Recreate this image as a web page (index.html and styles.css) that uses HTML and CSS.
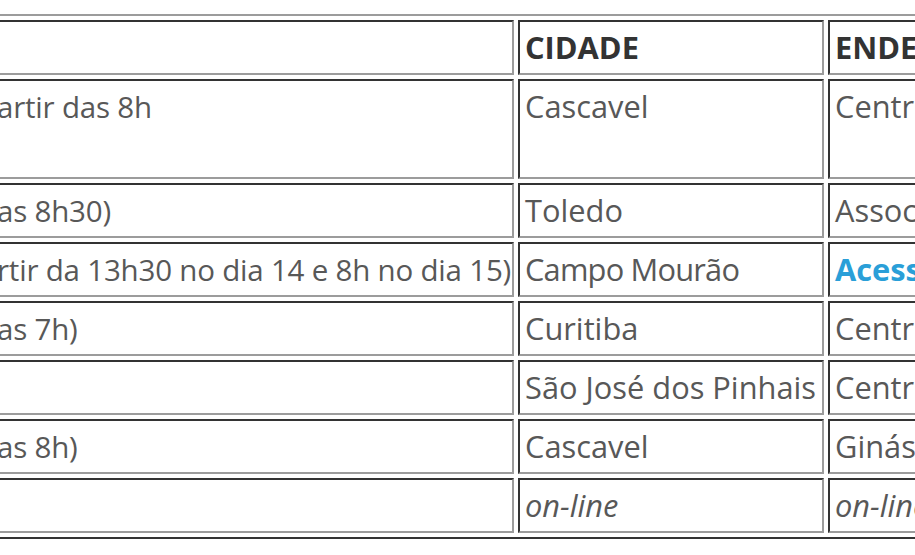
FILE: index.html
```html
<!DOCTYPE html>
<html lang="pt-BR">
<head>
<meta charset="utf-8">
<title>Agenda</title>
<link rel="stylesheet" href="styles.css">
</head>
<body>
<div class="viewport">
  <table class="schedule">
    <thead>
      <tr>
        <th class="c-date"></th>
        <th class="c-city">CIDADE</th>
        <th class="c-addr">ENDEREÇO</th>
        <th class="c-extra">INFORMAÇÕES</th>
      </tr>
    </thead>
    <tbody>
      <tr>
        <td class="when">artir das 8h</td>
        <td>Cascavel</td>
        <td>Centro de Convenções</td>
        <td>Vagas limitadas<br>inscrição prévia</td>
      </tr>
      <tr>
        <td class="when">as 8h30)</td>
        <td>Toledo</td>
        <td>Associação Comercial</td>
        <td>Gratuito</td>
      </tr>
      <tr>
        <td class="when">rtir da 13h30 no dia 14 e 8h no dia 15)</td>
        <td class="narrow">Campo Mourão</td>
        <td><a class="link" href="#">Acesse aqui</a></td>
        <td>Gratuito</td>
      </tr>
      <tr>
        <td class="when">as 7h)</td>
        <td>Curitiba</td>
        <td>Centro de Eventos</td>
        <td>Gratuito</td>
      </tr>
      <tr>
        <td class="when"></td>
        <td>São José dos Pinhais</td>
        <td>Centro Cultural</td>
        <td>Gratuito</td>
      </tr>
      <tr>
        <td class="when">as 8h)</td>
        <td>Cascavel</td>
        <td>Ginásio de Esportes</td>
        <td>Gratuito</td>
      </tr>
      <tr>
        <td class="when"></td>
        <td><em>on-line</em></td>
        <td><em>on-line</em></td>
        <td>Gratuito</td>
      </tr>
    </tbody>
  </table>
</div>
</body>
</html>
```

FILE: styles.css
```css
html, body {
  margin: 0;
  padding: 0;
  background: #ffffff;
}

.viewport {
  width: 915px;
  height: 555px;
  overflow: hidden;
  padding-top: 14px;
  box-sizing: border-box;
}

.schedule {
  table-layout: fixed;
  width: 1582px;
  margin-left: -16px;
  border-collapse: separate;
  border-spacing: 4px;
  border-style: solid;
  border-width: 2px;
  border-top-color: #9c9c9c;
  border-left-color: #9c9c9c;
  border-right-color: #333333;
  border-bottom-color: #333333;
  font-family: "Open Sans", "Liberation Sans", sans-serif;
  font-size: 30.8px;
  line-height: 45px;
  color: #585858;
}

.schedule th,
.schedule td {
  box-sizing: border-box;
  padding: 3px 5px;
  vertical-align: top;
  text-align: left;
  white-space: nowrap;
  overflow: hidden;
  border-style: solid;
  border-width: 2px;
  border-top-color: #333333;
  border-left-color: #333333;
  border-right-color: #9c9c9c;
  border-bottom-color: #9c9c9c;
}

.schedule th {
  font-weight: 700;
  color: #333333;
}

.c-date { width: 524px; }
.c-city { width: 306px; }
.c-addr { width: 414px; }
.c-extra { width: 314px; }

.schedule td.when {
  font-size: 29.5px;
  letter-spacing: -0.2px;
}

.schedule td.narrow {
  letter-spacing: -0.8px;
}

.schedule em {
  font-style: italic;
}

.link {
  color: #2a9fd8;
  font-weight: 700;
  text-decoration: none;
}
```
